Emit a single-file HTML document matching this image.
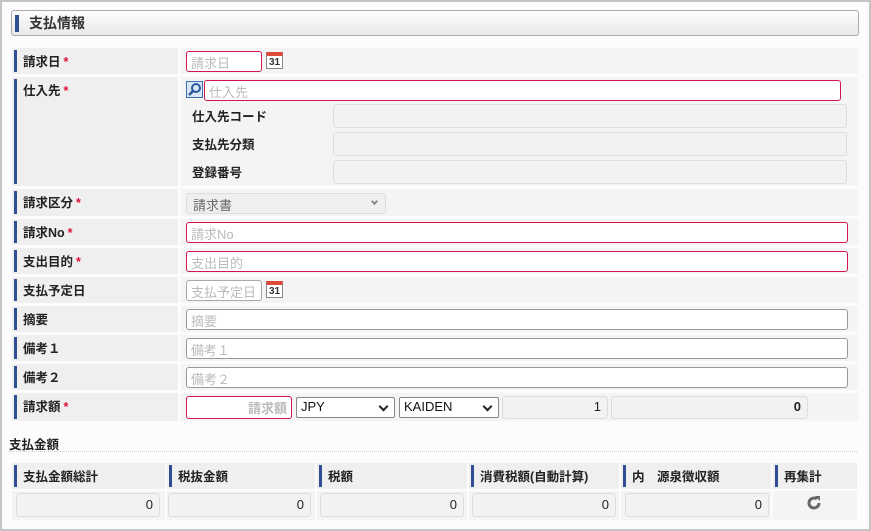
<!DOCTYPE html>
<html><head><meta charset="utf-8"><style>
*{box-sizing:border-box;margin:0;padding:0}
body{width:871px;height:531px;background:#fff;font-family:"Liberation Sans","Noto Sans CJK JP",sans-serif;font-size:12px;color:#222;position:relative;overflow:hidden}
.frame{position:absolute;left:0;top:0;width:871px;height:531px;border:2px solid #c4c4c4;background:#fcfcfe}
.a{position:absolute}
.hdr{left:11px;top:10px;width:848px;height:26px;border:1px solid #aaa;border-radius:3px;background:linear-gradient(#fdfdfd,#e9e9e9);font-size:14px;font-weight:bold;padding:2px 0 0 17px;color:#333}
.hdr:before{content:"";position:absolute;left:3px;top:4px;width:4px;height:17px;background:#2f4f93}
.lb{background:#efefef;font-weight:bold;padding:3px 0 0 11px;font-size:12.5px}
.lb:before{content:"";position:absolute;left:2px;top:2px;bottom:2px;width:3px;background:#2f4f93}
.req{color:#e0103a;margin-left:3px}
.vc{background:#f4f4f4}
.in{position:absolute;height:21px;border:1px solid #999;border-radius:3px;background:#fff;color:#bbb;padding:1px 4px;font-size:13px}
.rq{border-color:#d4164a}
.ro{position:absolute;height:24px;border:1px solid #ddd;border-radius:3px;background:#f2f2f2;text-align:right;padding:3px 6px;font-size:13px}
.sub{font-weight:bold;font-size:12.5px}
.cal{position:absolute;width:17px;height:17px;border:1px solid #888;background:#fff;font-size:10px;font-weight:bold;text-align:center;line-height:13px;color:#333;border-top:4px solid #e04a3a}
.sel{position:absolute;height:21px;border:1px solid #888;border-radius:2px;background:#fff;padding:1px 4px;font-size:13px;color:#111}
.sel:after{content:"";position:absolute;right:7px;top:5px;width:5px;height:5px;border-right:2px solid #222;border-bottom:2px solid #222;transform:rotate(45deg)}
</style></head><body>
<div class="frame"></div>
<div class="a hdr">支払情報</div>

<div class="a lb" style="left:12px;top:48px;width:166px;height:26px">請求日<span class="req">*</span></div>
<div class="a vc" style="left:181px;top:48px;width:677px;height:26px"></div>
<div class="in rq" style="left:186px;top:51px;width:76px">請求日</div>
<div class="cal" style="left:266px;top:52px">31</div>

<div class="a lb" style="left:12px;top:77px;width:166px;height:109px">仕入先<span class="req">*</span></div>
<div class="a vc" style="left:181px;top:77px;width:677px;height:109px"></div>
<div class="a" style="left:186px;top:81px;width:17px;height:17px;border:1px solid #3a6fb0;background:#d8e6f6">
<svg width="15" height="15" viewBox="0 0 15 15"><circle cx="9" cy="6" r="4" fill="none" stroke="#2a5a9a" stroke-width="2"/><path d="M6 9L2 13" stroke="#2a5a9a" stroke-width="2.5"/></svg></div>
<div class="in rq" style="left:204px;top:80px;width:637px">仕入先</div>
<div class="a sub" style="left:192px;top:106px">仕入先コード</div>
<div class="ro" style="left:333px;top:104px;width:514px"></div>
<div class="a sub" style="left:192px;top:134px">支払先分類</div>
<div class="ro" style="left:333px;top:132px;width:514px"></div>
<div class="a sub" style="left:192px;top:162px">登録番号</div>
<div class="ro" style="left:333px;top:160px;width:514px"></div>

<div class="a lb" style="left:12px;top:189px;width:166px;height:27px">請求区分<span class="req">*</span></div>
<div class="a vc" style="left:181px;top:189px;width:677px;height:27px"></div>
<div class="a" style="left:186px;top:193px;width:200px;height:21px;border:1px solid #ddd;border-radius:3px;background:#efefef;color:#666;padding:1px 6px;font-size:13px">請求書<span style="position:absolute;right:8px;top:5px;width:5px;height:5px;border-right:2px solid #888;border-bottom:2px solid #888;transform:rotate(45deg)"></span></div>

<div class="a lb" style="left:12px;top:219px;width:166px;height:26px">請求No<span class="req">*</span></div>
<div class="a vc" style="left:181px;top:219px;width:677px;height:26px"></div>
<div class="in rq" style="left:186px;top:222px;width:662px">請求No</div>

<div class="a lb" style="left:12px;top:248px;width:166px;height:26px">支出目的<span class="req">*</span></div>
<div class="a vc" style="left:181px;top:248px;width:677px;height:26px"></div>
<div class="in rq" style="left:186px;top:251px;width:662px">支出目的</div>

<div class="a lb" style="left:12px;top:277px;width:166px;height:26px">支払予定日</div>
<div class="a vc" style="left:181px;top:277px;width:677px;height:26px"></div>
<div class="in" style="left:186px;top:280px;width:76px;border-color:#aaa">支払予定日</div>
<div class="cal" style="left:266px;top:281px">31</div>

<div class="a lb" style="left:12px;top:306px;width:166px;height:26px">摘要</div>
<div class="a vc" style="left:181px;top:306px;width:677px;height:26px"></div>
<div class="in" style="left:186px;top:309px;width:662px">摘要</div>

<div class="a lb" style="left:12px;top:335px;width:166px;height:26px">備考１</div>
<div class="a vc" style="left:181px;top:335px;width:677px;height:26px"></div>
<div class="in" style="left:186px;top:338px;width:662px">備考１</div>

<div class="a lb" style="left:12px;top:364px;width:166px;height:26px">備考２</div>
<div class="a vc" style="left:181px;top:364px;width:677px;height:26px"></div>
<div class="in" style="left:186px;top:367px;width:662px">備考２</div>

<div class="a lb" style="left:12px;top:393px;width:166px;height:28px">請求額<span class="req">*</span></div>
<div class="a vc" style="left:181px;top:393px;width:677px;height:28px"></div>
<div class="in rq" style="left:186px;top:396px;width:106px;height:23px;text-align:right;font-weight:bold;font-size:13px">請求額</div>
<div class="sel" style="left:296px;top:397px;width:99px">JPY</div>
<div class="sel" style="left:399px;top:397px;width:100px">KAIDEN</div>
<div class="ro" style="left:502px;top:396px;width:106px;height:23px;padding-top:2px">1</div>
<div class="ro" style="left:611px;top:396px;width:197px;height:23px;padding-top:2px;font-weight:bold">0</div>

<div class="a sub" style="left:9px;top:434px">支払金額</div>
<div class="a" style="left:9px;top:451px;width:848px;border-top:1px dotted #ccc"></div>

<div class="a lb" style="left:12px;top:463px;width:153px;height:26px">支払金額総計</div>
<div class="a lb" style="left:167px;top:463px;width:148px;height:26px">税抜金額</div>
<div class="a lb" style="left:317px;top:463px;width:150px;height:26px">税額</div>
<div class="a lb" style="left:469px;top:463px;width:150px;height:26px">消費税額(自動計算)</div>
<div class="a lb" style="left:621px;top:463px;width:150px;height:26px">内　源泉徴収額</div>
<div class="a lb" style="left:773px;top:463px;width:84px;height:26px">再集計</div>
<div class="a vc" style="left:12px;top:491px;width:153px;height:29px"></div>
<div class="a vc" style="left:167px;top:491px;width:148px;height:29px"></div>
<div class="a vc" style="left:317px;top:491px;width:150px;height:29px"></div>
<div class="a vc" style="left:469px;top:491px;width:150px;height:29px"></div>
<div class="a vc" style="left:621px;top:491px;width:150px;height:29px"></div>
<div class="a vc" style="left:773px;top:491px;width:84px;height:29px"></div>
<div class="ro" style="left:16px;top:493px;width:144px">0</div>
<div class="ro" style="left:168px;top:493px;width:143px">0</div>
<div class="ro" style="left:320px;top:493px;width:144px">0</div>
<div class="ro" style="left:472px;top:493px;width:144px">0</div>
<div class="ro" style="left:625px;top:493px;width:144px">0</div>
<div class="a" style="left:806px;top:495px"><svg width="16" height="16" viewBox="0 0 16 16"><path d="M13 8A5 5 0 1 1 11 4" fill="none" stroke="#666" stroke-width="3"/><path d="M9 1L14 1L14 6Z" fill="#666"/></svg></div>
</body></html>
